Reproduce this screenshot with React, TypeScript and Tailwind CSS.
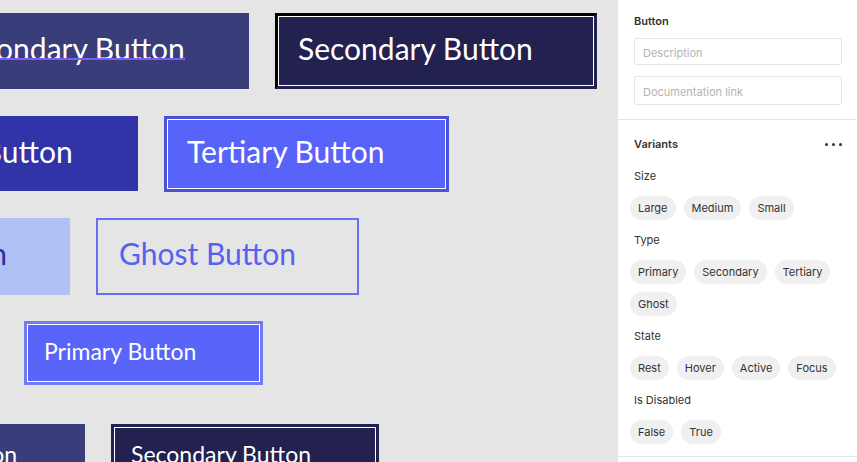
import React from "react";

type Btn = {
  left: number;
  top: number;
  w: number;
  h: number;
  bg: string;
  text: string;
  size: "lg" | "sm";
  pl: number;
  pt: number;
  color?: string;
  band?: string;
  bandTL?: string;
  frame?: boolean;
  border?: string;
  underline?: boolean;
};

function CanvasButton({ b }: { b: Btn }) {
  return (
    <div
      className="absolute overflow-hidden"
      style={{ left: b.left, top: b.top, width: b.w, height: b.h, background: b.bg }}
    >
      {b.band && (
        <div
          className="absolute inset-0 border-[3px]"
          style={{
            borderColor: b.band,
            borderTopColor: b.bandTL ?? b.band,
            borderLeftColor: b.bandTL ?? b.band,
          }}
        />
      )}
      {b.border && (
        <div className="absolute inset-0 border-2" style={{ borderColor: b.border }} />
      )}
      {b.frame && <div className="absolute inset-[3px] border border-white" />}
      <div
        className={
          "relative whitespace-nowrap font-['Lato',sans-serif] leading-none " +
          (b.size === "lg" ? "text-[30px]" : "text-[23px]")
        }
        style={{ paddingLeft: b.pl, paddingTop: b.pt, color: b.color ?? "#ffffff" }}
      >
        {b.underline ? (
          <span className="relative inline-block">
            {b.text}
            <span className="absolute left-0 right-0 top-[25px] h-[2px] bg-[#7b5cf6]" />
          </span>
        ) : (
          b.text
        )}
      </div>
    </div>
  );
}

const buttons: Btn[] = [
  { left: -73, top: 13, w: 322, h: 76, bg: "#393d79", text: "Secondary Button", size: "lg", pl: 23, pt: 20, underline: true },
  { left: 275, top: 13, w: 322, h: 76, bg: "#23214f", text: "Secondary Button", size: "lg", pl: 23, pt: 20, band: "#23214f", bandTL: "#000000", frame: true },
  { left: -147, top: 116, w: 285, h: 75, bg: "#3034a8", text: "Primary Button", size: "lg", pl: 21, pt: 20 },
  { left: 164, top: 116, w: 285, h: 76, bg: "#5763f9", text: "Tertiary Button", size: "lg", pl: 23, pt: 20, band: "#4b51d8", frame: true },
  { left: -193, top: 218, w: 263, h: 77, bg: "#b0c2f5", text: "Ghost Button", size: "lg", pl: 23, pt: 20, color: "#2d3192" },
  { left: 96, top: 218, w: 263, h: 77, bg: "transparent", text: "Ghost Button", size: "lg", pl: 23, pt: 20, color: "#5661ef", border: "#6670f5" },
  { left: 24, top: 321, w: 239, h: 64, bg: "#5865f8", text: "Primary Button", size: "sm", pl: 20, pt: 19, band: "#727bf4", frame: true },
  { left: -183, top: 424, w: 268, h: 64, bg: "#393d79", text: "Secondary Button", size: "sm", pl: 20, pt: 19 },
  { left: 111, top: 424, w: 268, h: 64, bg: "#23214f", text: "Secondary Button", size: "sm", pl: 20, pt: 19, band: "#23214f", frame: true },
];

function Chip({ label }: { label: string }) {
  return (
    <div className="flex h-6 items-center rounded-full bg-[#f0f0f0] px-2 leading-none text-[#333333]">
      {label}
    </div>
  );
}

function ChipRow({ chips }: { chips: string[] }) {
  return (
    <div className="mt-3 flex flex-wrap gap-2">
      {chips.map((c) => (
        <Chip key={c} label={c} />
      ))}
    </div>
  );
}

export default function App() {
  return (
    <div className="flex h-[462px] w-[857px] overflow-hidden bg-[#e5e5e5]">
      <div className="relative h-full w-[618px] shrink-0 overflow-hidden bg-[#e5e5e5]">
        {buttons.map((b, i) => (
          <CanvasButton key={i} b={b} />
        ))}
      </div>
      <aside className="h-full w-[239px] shrink-0 bg-white font-['Inter',sans-serif] text-[11px] text-[#333333]">
        <div className="border-b border-[#e5e5e5] pb-[14px] pl-4 pr-[15px] pt-[13px]">
          <div className="h-4 font-semibold leading-4">Button</div>
          <div className="mt-[9px] flex h-[27px] items-center rounded-[2px] border border-[#e6e6e6] px-2 pt-[3px] text-[#b3b3b3]">
            Description
          </div>
          <div className="mt-[11px] flex h-[29px] items-center rounded-[2px] border border-[#e6e6e6] px-2 pt-[3px] text-[#b3b3b3]">
            Documentation link
          </div>
        </div>
        <div className="border-b border-[#e5e5e5] pb-3 pl-3 pr-[15px] pt-2">
          <div className="flex h-8 items-center justify-between pl-1">
            <span className="font-semibold">Variants</span>
            <div className="flex items-center gap-[4px]">
              <span className="h-[3px] w-[3px] rounded-full bg-[#333333]" />
              <span className="h-[3px] w-[3px] rounded-full bg-[#333333]" />
              <span className="h-[3px] w-[3px] rounded-full bg-[#333333]" />
            </div>
          </div>
          <div className="mt-2 h-4 pl-1 leading-4">Size</div>
          <ChipRow chips={["Large", "Medium", "Small"]} />
          <div className="mt-3 h-4 pl-1 leading-4">Type</div>
          <ChipRow chips={["Primary", "Secondary", "Tertiary", "Ghost"]} />
          <div className="mt-3 h-4 pl-1 leading-4">State</div>
          <ChipRow chips={["Rest", "Hover", "Active", "Focus"]} />
          <div className="mt-3 h-4 pl-1 leading-4">Is Disabled</div>
          <ChipRow chips={["False", "True"]} />
        </div>
      </aside>
    </div>
  );
}
